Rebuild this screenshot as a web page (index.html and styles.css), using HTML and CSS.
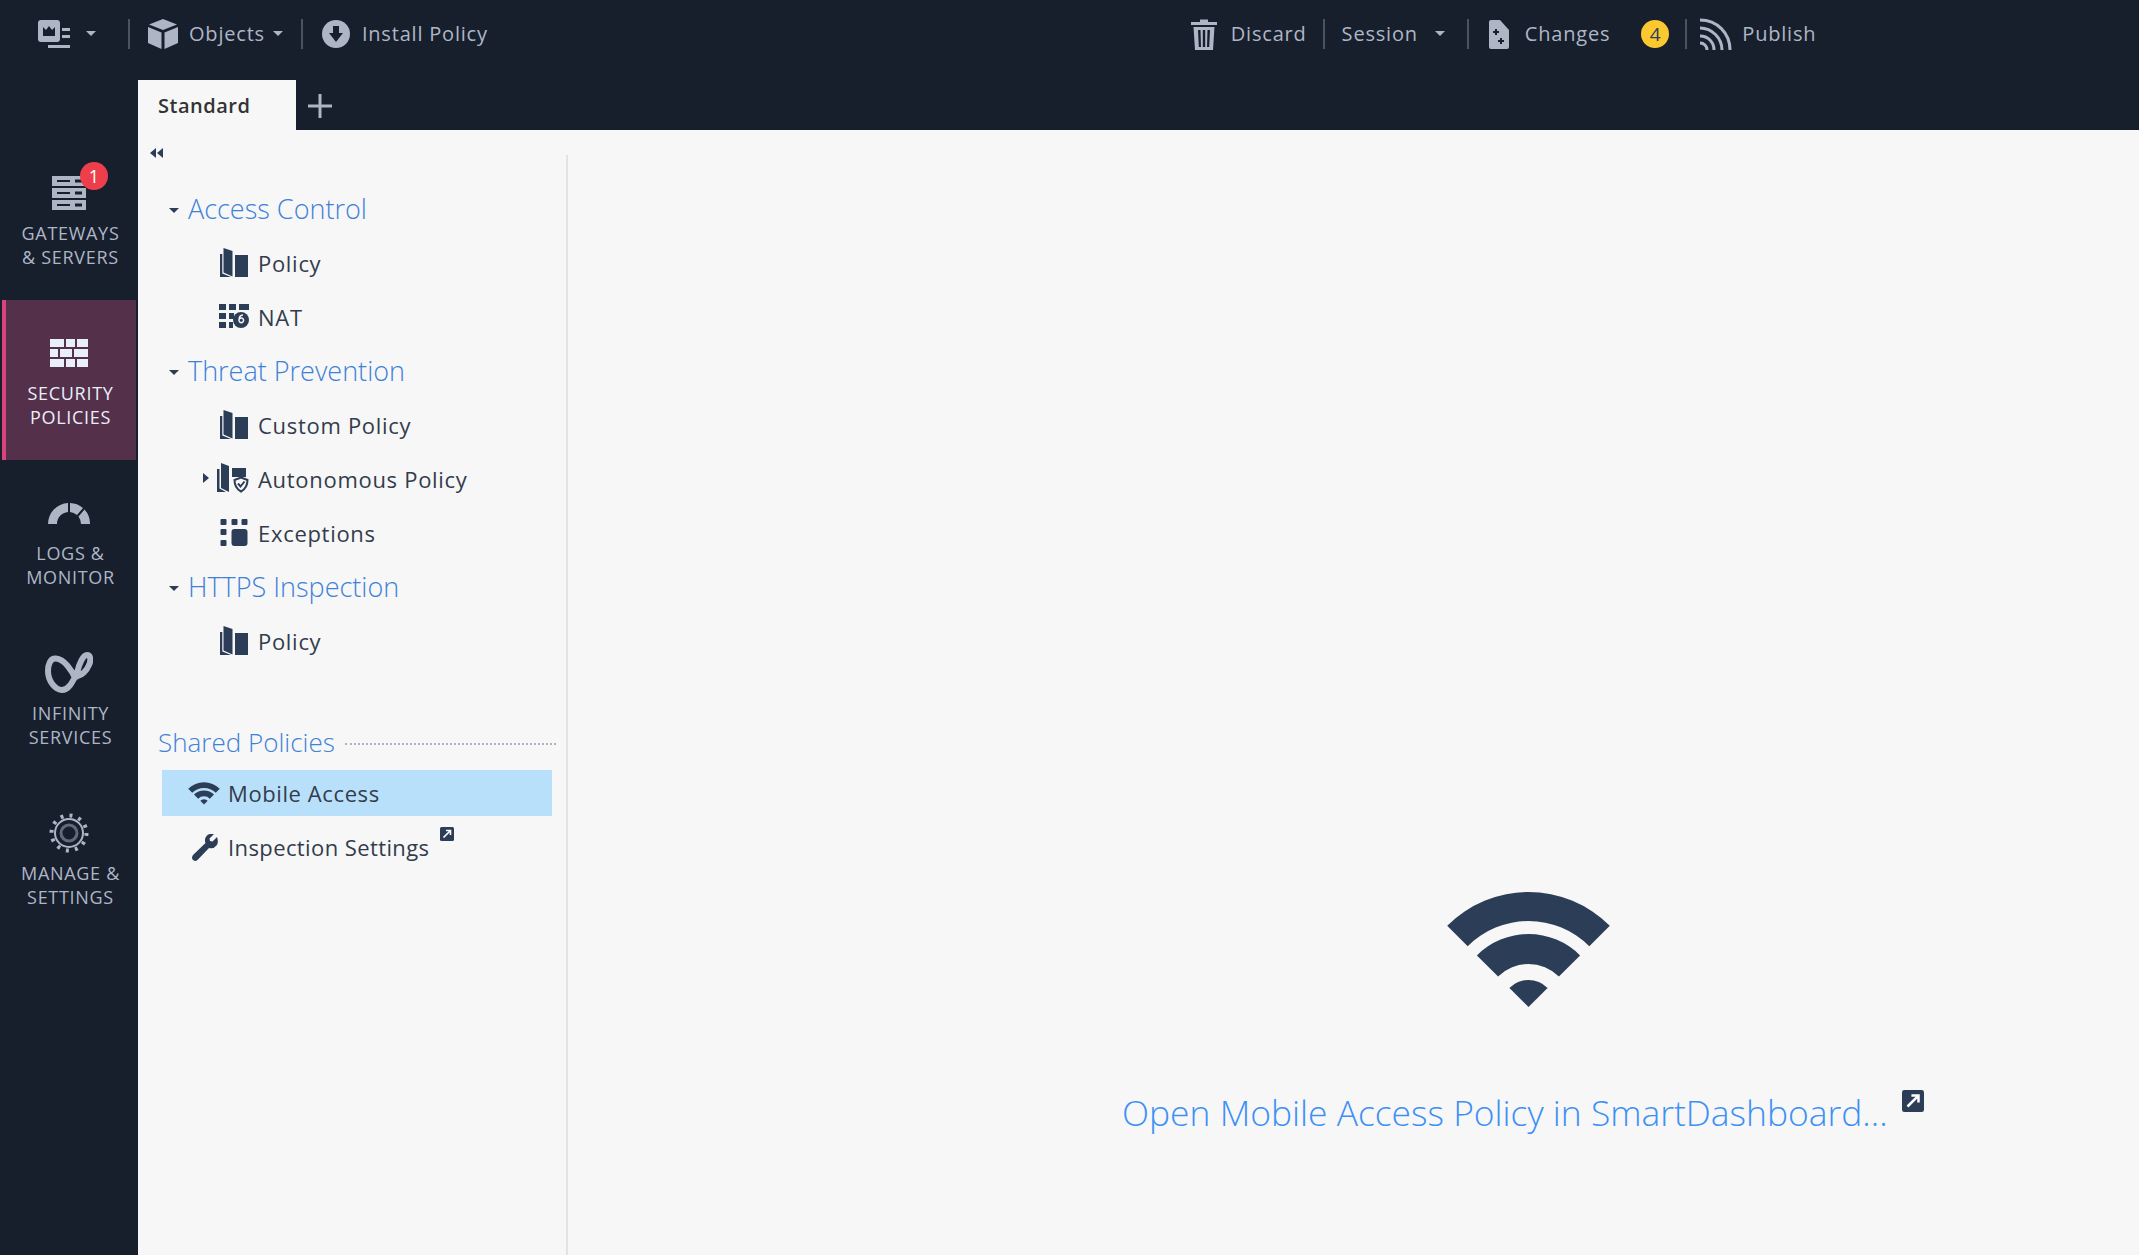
FILE: index.html
```html
<!DOCTYPE html>
<html lang="en">
<head>
    <meta charset="UTF-8">
    <title>Security Policies</title>
    <link rel="stylesheet" href="styles.css">
</head>
<body>
    <svg class="defs" width="0" height="0">
        <symbol id="wifi" viewBox="0 0 165 116">
            <path d="M1.2 33.7A115 115 0 0 1 163.8 33.7L143.3 54.2A86 86 0 0 0 21.7 54.2Z"/>
            <path d="M30.9 63.4A73 73 0 0 1 134.1 63.4L112.9 84.6A43 43 0 0 0 52.1 84.6Z"/>
            <path d="M63.4 95.9A27 27 0 0 1 101.6 95.9L82.5 115Z"/>
        </symbol>
        <symbol id="book" viewBox="0 0 28 29">
            <path d="M3.500 0L12.500 3V28.500L3.500 24.500Z"/>
            <path d="M0 6H2.300V25.500L11 29H0Z"/>
            <rect x="15" y="7" width="13" height="22"/>
        </symbol>
        <symbol id="ext" viewBox="0 0 14 14">
            <rect width="14" height="14" rx="1.500"/>
            <path d="M3.500 10.500L10 4M6 3.500H10.500V8" fill="none" stroke="#fff" stroke-width="1.600"/>
        </symbol>
    </svg>

    <header class="topbar">
        <div class="toolbar">
            <div class="tool tool-menu">
                <svg class="ic" width="32" height="28" viewBox="0 0 32 28"><rect width="22" height="22" rx="3"/><path d="M5 7L8 10L11 6L14 10L17 7V16H5Z" fill="#171f2d"/><path d="M24 8H32V11H24ZM24 15H32V18H24ZM10 25H32V28H10Z"/></svg>
                <span class="caret caret-menu"></span>
            </div>
            <span class="sep"></span>
            <div class="tool tool-objects">
                <svg class="ic" width="30" height="30" viewBox="0 0 30 30"><path d="M15 0L29 5.500L15 11L1 5.500Z"/><path d="M0 8L13.500 13.500V30L0 24Z"/><path d="M30 8L16.500 13.500V30L30 24Z"/></svg>
                <span>Objects</span>
                <span class="caret"></span>
            </div>
            <span class="sep"></span>
            <div class="tool tool-install">
                <svg class="ic" width="28" height="28" viewBox="0 0 28 28"><circle cx="14" cy="14" r="14"/><path d="M11 6H17V13H21L14 22L7 13H11Z" fill="#171f2d"/></svg>
                <span>Install Policy</span>
            </div>

            <div class="tool tool-discard">
                <svg class="ic" width="26" height="32" viewBox="0 0 26 32"><path d="M9 4V1.500H17V4H26V7H0V4Z"/><path d="M2.500 9H23.500L22 32H4ZM7 12L7.800 29H10L9.500 12ZM11.800 12V29H14.200V12ZM16.500 12L16 29H18.200L19 12Z" fill-rule="evenodd"/></svg>
                <span>Discard</span>
            </div>
            <span class="sep"></span>
            <div class="tool tool-session">
                <span>Session</span>
                <span class="caret"></span>
            </div>
            <span class="sep"></span>
            <div class="tool tool-changes">
                <svg class="ic" width="20" height="29" viewBox="0 0 20 29"><path d="M2 0H11L20 10V27Q20 29 18 29H2Q0 29 0 27V2Q0 0 2 0Z"/><path d="M6 9H8V11H10V13H8V15H6V13H4V11H6ZM11 18H13V20H15V22H13V24H11V22H9V20H11Z" fill="#171f2d"/></svg>
                <span>Changes</span>
            </div>
            <span class="count">4</span>
            <span class="sep"></span>
            <div class="tool tool-publish">
                <svg class="ic-line" width="32" height="32" viewBox="0 0 32 32"><path d="M0 2C17 2 30 15 30 32M0 10C12 10 22 20 22 32M0 18C8 18 14 24 14 32M0 25C4 25 7 28 7 32"/></svg>
                <span>Publish</span>
            </div>
        </div>
        <div class="tabs">
            <div class="tab">Standard</div>
            <svg class="tab-add" width="24" height="24" viewBox="0 0 24 24"><path d="M12 0V24M0 12H24"/></svg>
        </div>
    </header>

    <div class="workspace">
        <nav class="sidenav">
            <div class="nav-item">
                <span class="nav-icon">
                    <svg class="ic" width="34" height="34" viewBox="0 0 34 34"><path d="M0 0H34V10H0ZM0 12H34V22H0ZM0 24H34V34H0ZM5 4V6H18V4ZM5 16V18H18V16ZM5 28V30H18V28ZM23 3.500V6.500H30V3.500ZM23 15.500V18.500H30V15.500ZM23 27.500V30.500H30V27.500Z" fill-rule="evenodd"/></svg>
                </span>
                <span class="nav-badge">1</span>
                <span class="nav-label">GATEWAYS<br>&amp; SERVERS</span>
            </div>
            <div class="nav-item active">
                <span class="nav-icon">
                    <svg class="ic" width="38" height="28" viewBox="0 0 38 28"><path d="M0 0H14V8H0ZM16 0H25V8H16ZM27 0H38V8H27ZM0 10H8V18H0ZM10 10H22V18H10ZM24 10H38V18H24ZM0 20H14V28H0ZM16 20H25V28H16ZM27 20H38V28H27Z"/></svg>
                </span>
                <span class="nav-label">SECURITY<br>POLICIES</span>
            </div>
            <div class="nav-item">
                <span class="nav-icon">
                    <svg class="ic" width="42" height="22" viewBox="0 0 42 22"><path d="M0 22A21 21 0 0 1 20 1V10A12 12 0 0 0 9 22Z"/><path d="M22 1A21 21 0 0 1 35 6L29 13Q26 10.500 22 10Z"/><path d="M36.500 7.500A21 21 0 0 1 42 22H33Q33 18 30.500 14.500Z"/></svg>
                </span>
                <span class="nav-label">LOGS &amp;<br>MONITOR</span>
            </div>
            <div class="nav-item">
                <span class="nav-icon">
                    <svg class="ic-line ic-infinity" width="48" height="42" viewBox="0 0 48 42"><path d="M31 28C27 18 19 7 11 6.500C5 6 3 13 3 19C3 30 11 38 17 38C24 38 28 29 32 21C34 12 38 3 42 3C46 3 46 9 44 13C42 18 37 24 31 24"/></svg>
                </span>
                <span class="nav-label">INFINITY<br>SERVICES</span>
            </div>
            <div class="nav-item">
                <span class="nav-icon">
                    <svg class="ic-gear" width="40" height="40" viewBox="0 0 40 40"><circle cx="20" cy="20" r="17.500" fill="none" stroke-width="4" stroke-dasharray="3 6.160"/><circle cx="20" cy="20" r="14" fill="none" stroke-width="2"/><circle cx="20" cy="20" r="8" fill="none" stroke="#5f6a7d" stroke-width="3"/></svg>
                </span>
                <span class="nav-label">MANAGE &amp;<br>SETTINGS</span>
            </div>
        </nav>

        <aside class="panel">
            <div class="collapse"><span class="tri-left"></span><span class="tri-left"></span></div>

            <div class="tree-head"><span class="caret caret-dark"></span>Access Control</div>
            <div class="tree-row"><svg class="row-ic" width="28" height="29"><use href="#book"/></svg>Policy</div>
            <div class="tree-row">
                <svg class="row-ic" width="30" height="24" viewBox="0 0 30 24"><path d="M0 0H7V6H0ZM10 0H17V6H10ZM20 0H30V6H20ZM0 9H7V15H0ZM10 9H15V15H10ZM0 18H7V24H0ZM10 18H14V24H10Z"/><circle cx="22" cy="16" r="8"/><path d="M24 11Q20 11 20 16.500A2.300 2.300 0 1 0 20.400 15" fill="none" stroke="#f7f7f7" stroke-width="1.500"/></svg>
                NAT
            </div>

            <div class="tree-head"><span class="caret caret-dark"></span>Threat Prevention</div>
            <div class="tree-row"><svg class="row-ic" width="28" height="29"><use href="#book"/></svg>Custom Policy</div>
            <div class="tree-row">
                <span class="tri-right"></span>
                <svg class="row-ic row-ic-wide" width="32" height="30" viewBox="0 0 32 30"><path d="M4 0L12 3V29L4 25Z"/><path d="M0 6H2.500V25.500L9 29H0Z"/><path d="M15 5H29V14H15Z"/><path d="M24 14.500L30.500 17Q30.500 25 24 28.500Q17.500 25 17.500 17Z" fill="#f7f7f7" stroke="#2c3e57" stroke-width="2"/><path d="M21 20.500L23.500 23.500L27.500 18.500" fill="none" stroke="#2c3e57" stroke-width="2"/></svg>
                Autonomous Policy
            </div>
            <div class="tree-row">
                <svg class="row-ic" width="27" height="27" viewBox="0 0 27 27"><rect width="6" height="6" rx="1"/><rect x="11" width="6" height="6" rx="1"/><rect x="21" width="6" height="6" rx="1"/><rect y="10" width="6" height="6" rx="1"/><rect y="21" width="6" height="6" rx="1"/><rect x="11" y="10" width="16" height="17" rx="3"/></svg>
                Exceptions
            </div>

            <div class="tree-head"><span class="caret caret-dark"></span>HTTPS Inspection</div>
            <div class="tree-row"><svg class="row-ic" width="28" height="29"><use href="#book"/></svg>Policy</div>

            <div class="shared-head"><span>Shared Policies</span><span class="dots"></span></div>
            <div class="shared-row selected"><svg class="shared-ic" width="32" height="23"><use href="#wifi"/></svg>Mobile Access</div>
            <div class="shared-row shared-row-tight">
                <svg class="shared-ic wrench" width="26" height="27" viewBox="0 0 26 27"><path d="M25 3L20.500 7.500L18 7L17.500 4.500L22 0Q17 -1 14.500 2Q12 5 13.500 9L1 21Q-1 24 1 26Q4 28 6 25.500L17 14Q22 15 24.500 11.500Q27 8 25 3Z"/></svg>
                Inspection Settings
                <svg class="ext-small" width="14" height="14"><use href="#ext"/></svg>
            </div>
        </aside>

        <main class="content">
            <div class="open-box">
                <svg class="open-wifi" width="165" height="116"><use href="#wifi"/></svg>
                <div class="open-link">
                    <a href="#">Open Mobile Access Policy in SmartDashboard...</a>
                    <svg class="ext-big" width="24" height="22"><use href="#ext"/></svg>
                </div>
            </div>
        </main>
    </div>
</body>
</html>
```

FILE: styles.css
```css
html, body {
    margin: 0;
    height: 100%;
}
body {
    display: flex;
    flex-direction: column;
    overflow: hidden;
    background: #171f2d;
    font-family: "Open Sans", sans-serif;
    color: #333c4c;
}
.defs {
    position: absolute;
}
symbol {
    fill: #2c3e57;
}
.topbar {
    height: 130px;
    flex: none;
}
.toolbar {
    height: 68px;
    display: flex;
    align-items: center;
    font-size: 20px;
    letter-spacing: 0.8px;
    color: #aeb6c6;
}
.ic {
    fill: #aeb6c6;
    flex: none;
}
.ic-line {
    fill: none;
    stroke: #aeb6c6;
    stroke-width: 3;
    flex: none;
}
.ic-infinity {
    stroke-width: 6;
}
.ic-gear {
    stroke: #aeb6c6;
}
.tool {
    display: flex;
    align-items: center;
}
.tool span {
    margin-top: -1px;
}
.tool-menu {
    margin-left: 38px;
    gap: 16px;
    margin-right: 32px;
}
.tool-objects {
    margin: 0 18px;
    gap: 11px;
}
.tool-objects .caret {
    margin-left: -3px;
}
.tool-install {
    margin-left: 19px;
    gap: 12px;
}
.tool-discard {
    margin-left: 703px;
    margin-right: 16px;
    gap: 14px;
}
.tool-session {
    margin: 0 22px 0 17px;
    gap: 17px;
}
.tool-changes {
    margin: 0 31px 0 20px;
    gap: 16px;
}
.tool-publish {
    margin-left: 13px;
    gap: 10px;
}
.sep {
    width: 2px;
    height: 30px;
    background: #4a5364;
    flex: none;
}
.caret {
    width: 0;
    height: 0;
    border-left: 5px solid transparent;
    border-right: 5px solid transparent;
    border-top: 5px solid #aeb6c6;
    flex: none;
}
.caret-menu {
    margin-top: -6px;
}
.caret-dark {
    border-top-color: #2c3e57;
    margin: 4px 9px 0 0;
}
.count {
    width: 28px;
    height: 28px;
    border-radius: 50%;
    background: #fbc92f;
    color: #2c3e57;
    font-size: 19px;
    letter-spacing: 0;
    line-height: 28px;
    text-align: center;
    margin-right: 16px;
}
.tabs {
    display: flex;
    align-items: center;
    height: 50px;
    margin-top: 12px;
    padding-left: 138px;
}
.tab {
    width: 158px;
    height: 50px;
    box-sizing: border-box;
    padding-left: 20px;
    line-height: 52px;
    background: #f7f7f7;
    color: #333;
    font-size: 20px;
    letter-spacing: 0.5px;
    font-weight: 600;
}
.tab-add {
    margin-left: 12px;
    margin-top: 2px;
    fill: none;
    stroke: #aeb6c6;
    stroke-width: 3;
}
.workspace {
    flex: 1;
    display: flex;
    min-height: 0;
}
.sidenav {
    width: 138px;
    flex: none;
    padding-top: 10px;
}
.nav-item {
    position: relative;
    height: 160px;
    box-sizing: border-box;
    margin-left: 2px;
    width: 134px;
    border-left: 4px solid transparent;
    padding-top: 25px;
    text-align: center;
    color: #aeb6c6;
}
.nav-item.active {
    background: #55304a;
    border-left-color: #d9447c;
    color: #e9effa;
}
.nav-item.active .ic {
    fill: #e9effa;
}
.nav-icon {
    display: flex;
    height: 56px;
    padding-right: 4px;
    align-items: center;
    justify-content: center;
}
.nav-label {
    display: block;
    padding-right: 1px;
    font-size: 18px;
    letter-spacing: 0.7px;
    line-height: 24px;
}
.nav-badge {
    position: absolute;
    left: 74px;
    top: 22px;
    width: 28px;
    height: 28px;
    border-radius: 50%;
    background: #ec3f4b;
    color: #fff;
    font-size: 18px;
    line-height: 28px;
}
.panel {
    width: 430px;
    flex: none;
    background: #f7f7f7;
    position: relative;
    padding-top: 51px;
}
.panel::after {
    content: "";
    position: absolute;
    right: 0;
    top: 25px;
    bottom: 0;
    width: 2px;
    background: #e1e3e7;
}
.collapse {
    position: absolute;
    left: 12px;
    top: 18px;
    display: flex;
}
.tri-left {
    width: 0;
    height: 0;
    border-top: 5px solid transparent;
    border-bottom: 5px solid transparent;
    border-right: 6px solid #2c3e57;
    margin-right: 1px;
}
.tri-right {
    position: absolute;
    left: 65px;
    top: 50%;
    margin-top: -5px;
    width: 0;
    height: 0;
    border-top: 5px solid transparent;
    border-bottom: 5px solid transparent;
    border-left: 6px solid #2c3e57;
}
.tree-head {
    height: 54px;
    display: flex;
    align-items: center;
    padding-left: 31px;
    font-size: 27px;
    font-weight: 300;
    color: #3e82d8;
}
.tree-row {
    position: relative;
    height: 54px;
    box-sizing: border-box;
    padding: 2px 0 0 120px;
    display: flex;
    align-items: center;
    font-size: 22px;
    letter-spacing: 0.7px;
    color: #333c4c;
}
.row-ic {
    width: 30px;
    margin: -2px 9px 0 -39px;
    fill: #2c3e57;
    flex: none;
}
.row-ic-wide {
    margin-left: -41px;
    width: 32px;
}
.shared-head {
    display: flex;
    align-items: center;
    height: 54px;
    margin-top: 48px;
    padding-left: 20px;
    font-size: 26px;
    font-weight: 300;
    color: #3e82d8;
}
.dots {
    flex: 1;
    margin: 4px 12px 0 10px;
    border-top: 2px dotted #aeb4bf;
}
.shared-row {
    position: relative;
    display: flex;
    align-items: center;
    height: 46px;
    margin: 1px 16px 8px 24px;
    padding-left: 26px;
    font-size: 22px;
    letter-spacing: 0.6px;
}
.shared-row-tight {
    letter-spacing: 0.4px;
}
.shared-row.selected {
    background: #b9e0fb;
}
.shared-ic {
    fill: #2c3e57;
    margin-right: 8px;
    flex: none;
}
.wrench {
    margin-left: 4px;
    margin-right: 10px;
}
.ext-small {
    align-self: flex-start;
    margin-left: 10px;
    margin-top: 3px;
}
.content {
    flex: 1;
    background: #f7f7f7;
    padding: 762px 0 0 554px;
    min-width: 0;
}
.open-box {
    width: 812px;
    display: flex;
    flex-direction: column;
    align-items: center;
}
.open-wifi {
    fill: #2c3e57;
}
.open-link {
    align-self: flex-start;
    margin-top: 80px;
    display: flex;
    align-items: flex-start;
    white-space: nowrap;
}
.open-link a {
    color: #3d90f5;
    text-decoration: none;
    font-size: 35.4px;
    font-weight: 300;
    line-height: 48px;
}
.ext-big {
    margin-left: 13px;
    margin-top: 2px;
}
```
